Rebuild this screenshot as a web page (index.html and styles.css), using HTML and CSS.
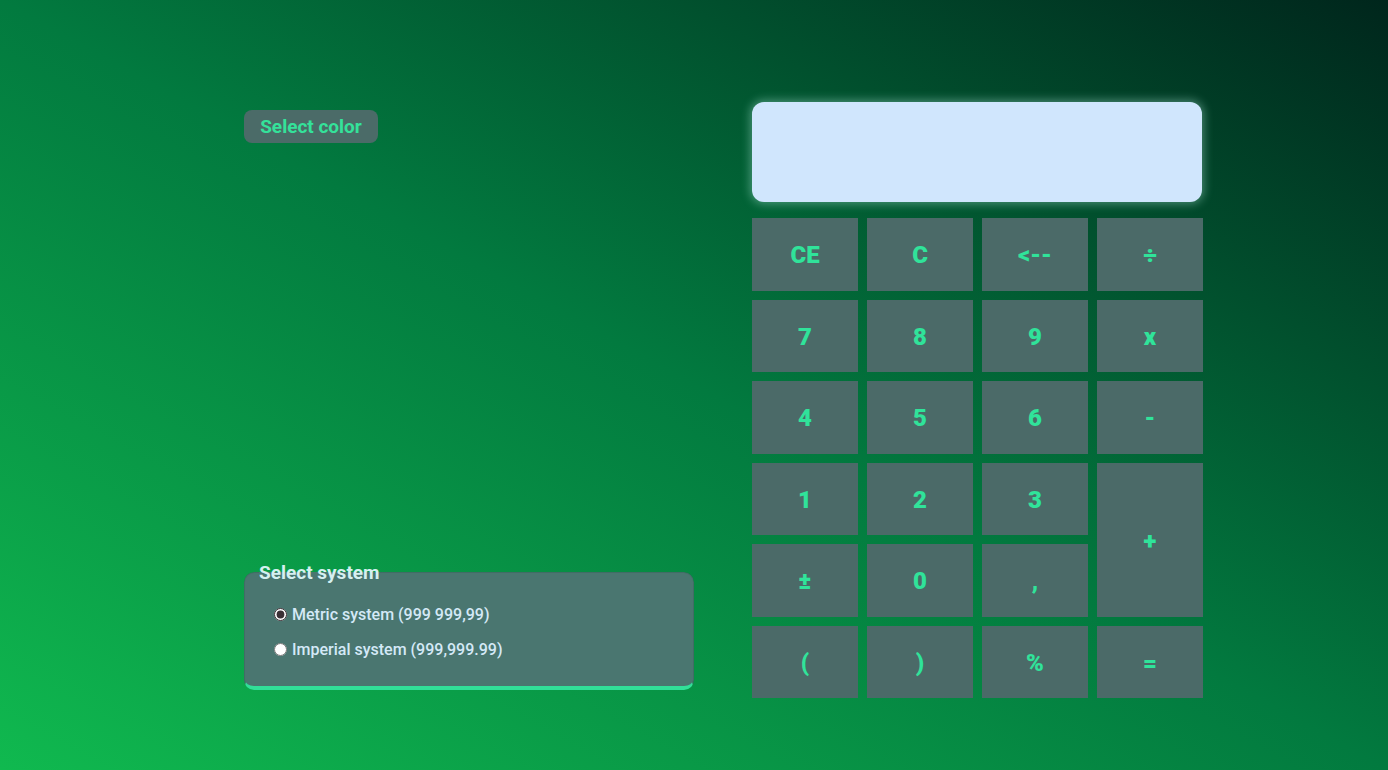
FILE: index.html
```html
<!DOCTYPE html>
<html lang="en">
<head>
<meta charset="utf-8">
<title>Calculator</title>
<link rel="stylesheet" href="styles.css">
</head>
<body>
<main class="page">
  <section class="side">
    <button class="color-btn" type="button">Select color</button>
    <fieldset class="system">
      <legend>Select system</legend>
      <label class="opt"><input type="radio" name="sys" checked> Metric system (999 999,99)</label>
      <label class="opt"><input type="radio" name="sys"> Imperial system (999,999.99)</label>
    </fieldset>
  </section>
  <section class="calc">
    <div class="display"></div>
    <div class="keys">
      <button class="key">CE</button>
      <button class="key">C</button>
      <button class="key">&lt;--</button>
      <button class="key">÷</button>
      <button class="key">7</button>
      <button class="key">8</button>
      <button class="key">9</button>
      <button class="key">x</button>
      <button class="key">4</button>
      <button class="key">5</button>
      <button class="key">6</button>
      <button class="key">-</button>
      <button class="key">1</button>
      <button class="key">2</button>
      <button class="key">3</button>
      <button class="key plus">+</button>
      <button class="key">±</button>
      <button class="key">0</button>
      <button class="key">,</button>
      <button class="key">(</button>
      <button class="key">)</button>
      <button class="key">%</button>
      <button class="key">=</button>
    </div>
  </section>
</main>
</body>
</html>
```

FILE: styles.css
```css
* { box-sizing: border-box; }
html, body { height: 100%; }
body {
  margin: 0;
  font-family: Roboto, "Noto Sans", sans-serif;
  background: linear-gradient(to top right, #10b94f 0%, #027a3f 50%, #00261c 100%);
  overflow: hidden;
}
.page {
  display: flex;
  gap: 58px;
  padding: 102px 0 0 244px;
}
.side {
  width: 450px;
  height: 596px;
  padding: 8px 0;
  display: flex;
  flex-direction: column;
  justify-content: space-between;
  align-items: flex-start;
}
.color-btn {
  height: 33px;
  width: 134px;
  padding: 0;
  border: none;
  border-radius: 8px;
  background: #4b6b68;
  color: #34e29a;
  font-family: Roboto, sans-serif;
  font-size: 19px;
  font-weight: 700;
}
.system {
  width: 450px;
  margin: 0;
  padding: 14px 30px 19px 30px;
  border: 1px solid rgba(40, 80, 70, 0.25);
  border-bottom: 4px solid #31df98;
  border-radius: 10px;
  background: #4a7670;
  display: flex;
  flex-direction: column;
}
.system legend {
  margin-left: -16px;
  padding: 0;
  color: #d5f0f0;
  font-size: 19px;
  font-weight: 700;
  line-height: 21px;
}
.opt {
  height: 35px;
  display: flex;
  align-items: center;
  gap: 5px;
  color: #d4e9f7;
  font-size: 16px;
  font-weight: 500;
}
.opt input {
  margin: 0 0 0 -1px;
  width: 13px;
  height: 13px;
  accent-color: #3a2f35;
}
.calc {
  width: 451px;
  display: flex;
  flex-direction: column;
  gap: 16px;
}
.display {
  width: 450px;
  height: 100px;
  border-radius: 12px;
  background: #d0e6fd;
  box-shadow: 0 0 10px 2px rgba(160, 220, 205, 0.45);
}
.keys {
  display: grid;
  grid-template-columns: repeat(4, 106px);
  grid-auto-rows: 72.5px;
  gap: 9px;
}
.key {
  border: none;
  border-radius: 0;
  background: #4b6a68;
  color: #30e39a;
  font-family: Roboto, sans-serif;
  font-size: 24px;
  font-weight: 900;
  padding: 2px 0 0;
}
.plus {
  grid-column: 4;
  grid-row: 4 / span 2;
}
```
